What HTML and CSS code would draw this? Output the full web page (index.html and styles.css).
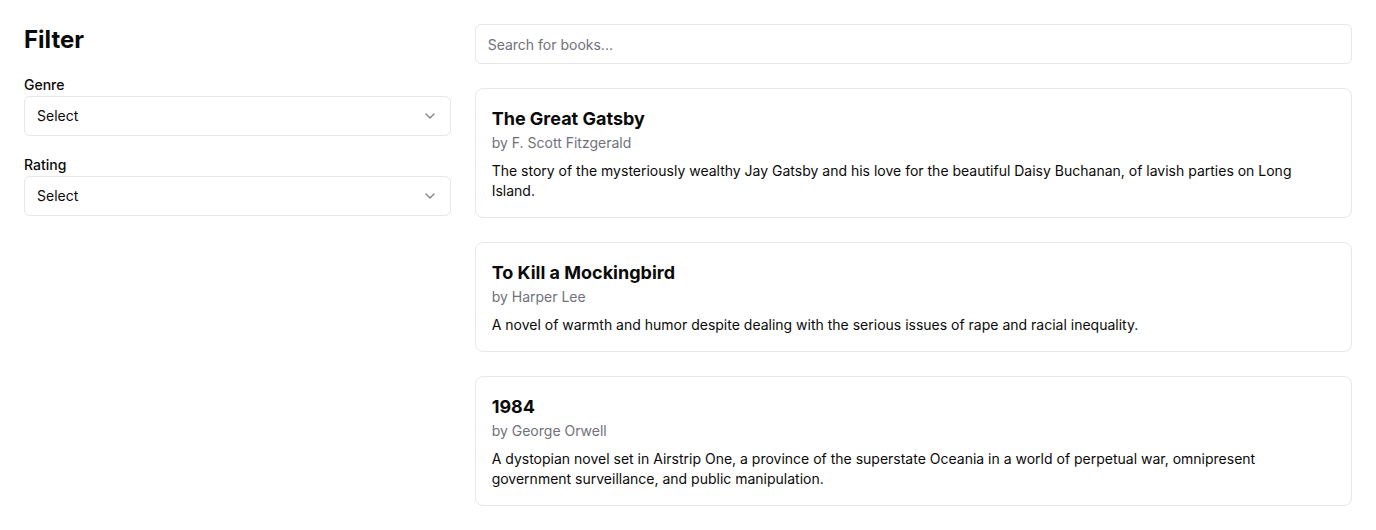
FILE: index.html
```html
<!DOCTYPE html>
<html lang="en">
<head>
<meta charset="utf-8">
<title>Books</title>
<link rel="stylesheet" href="styles.css">
</head>
<body>
<div class="page">
  <aside class="filters">
    <h2 class="filters-title">Filter</h2>
    <div class="field">
      <label class="field-label">Genre</label>
      <button class="select" type="button">
        <span>Select</span>
        <svg class="chevron" viewBox="0 0 24 24" width="16" height="16" fill="none" stroke="currentColor" stroke-width="2" stroke-linecap="round" stroke-linejoin="round"><path d="m6 9 6 6 6-6"/></svg>
      </button>
    </div>
    <div class="field">
      <label class="field-label">Rating</label>
      <button class="select" type="button">
        <span>Select</span>
        <svg class="chevron" viewBox="0 0 24 24" width="16" height="16" fill="none" stroke="currentColor" stroke-width="2" stroke-linecap="round" stroke-linejoin="round"><path d="m6 9 6 6 6-6"/></svg>
      </button>
    </div>
  </aside>
  <main class="results">
    <input class="search" type="text" placeholder="Search for books...">
    <div class="book-list">
      <article class="book">
        <h3 class="book-title">The Great Gatsby</h3>
        <p class="book-author">by F. Scott Fitzgerald</p>
        <p class="book-desc">The story of the mysteriously wealthy Jay Gatsby and his love for the beautiful Daisy Buchanan, of lavish parties on Long Island.</p>
      </article>
      <article class="book">
        <h3 class="book-title">To Kill a Mockingbird</h3>
        <p class="book-author">by Harper Lee</p>
        <p class="book-desc">A novel of warmth and humor despite dealing with the serious issues of rape and racial inequality.</p>
      </article>
      <article class="book">
        <h3 class="book-title">1984</h3>
        <p class="book-author">by George Orwell</p>
        <p class="book-desc">A dystopian novel set in Airstrip One, a province of the superstate Oceania in a world of perpetual war, omnipresent government surveillance, and public manipulation.</p>
      </article>
    </div>
  </main>
</div>
</body>
</html>
```
FILE: styles.css
```css
* { box-sizing: border-box; }
html, body { margin: 0; padding: 0; background: #ffffff; }
body {
  font-family: Inter, "Noto Sans", "Liberation Sans", sans-serif;
  color: #0a0a0a;
  -webkit-font-smoothing: antialiased;
}
.page {
  display: grid;
  grid-template-columns: repeat(3, minmax(0, 1fr));
  gap: 24px;
  padding: 24px;
}
.filters { grid-column: span 1; }
.results { grid-column: span 2; }
.filters-title {
  margin: 0 0 19px;
  font-size: 24px;
  line-height: 32px;
  font-weight: 700;
}
.field { margin-bottom: 19px; }
.field-label {
  display: block;
  font-size: 14px;
  line-height: 20px;
  font-weight: 500;
  margin-bottom: 1px;
}
.select {
  display: flex;
  align-items: center;
  justify-content: space-between;
  width: 100%;
  height: 40px;
  padding: 8px 12px;
  border: 1px solid #e5e7eb;
  border-radius: 6px;
  background: #ffffff;
  font-family: inherit;
  font-size: 14px;
  line-height: 20px;
  color: #0a0a0a;
  text-align: left;
}
.chevron { color: #0a0a0a; opacity: 0.5; flex: none; }
.search {
  display: block;
  width: 100%;
  height: 40px;
  padding: 8px 12px;
  border: 1px solid #e5e7eb;
  border-radius: 6px;
  font-family: inherit;
  font-size: 14px;
  line-height: 20px;
  color: #0a0a0a;
  margin-bottom: 24px;
  outline: none;
}
.search::placeholder { color: #71717a; }
.book-list { display: flex; flex-direction: column; gap: 24px; }
.book {
  border: 1px solid #e5e7eb;
  border-radius: 8px;
  padding: 16px;
}
.book-title {
  margin: 0;
  font-size: 18px;
  line-height: 28px;
  font-weight: 700;
}
.book-author {
  margin: 0;
  font-size: 14px;
  line-height: 20px;
  color: #71717a;
}
.book-desc {
  margin: 8px 0 0;
  font-size: 14px;
  line-height: 20px;
  color: #0a0a0a;
}
```
